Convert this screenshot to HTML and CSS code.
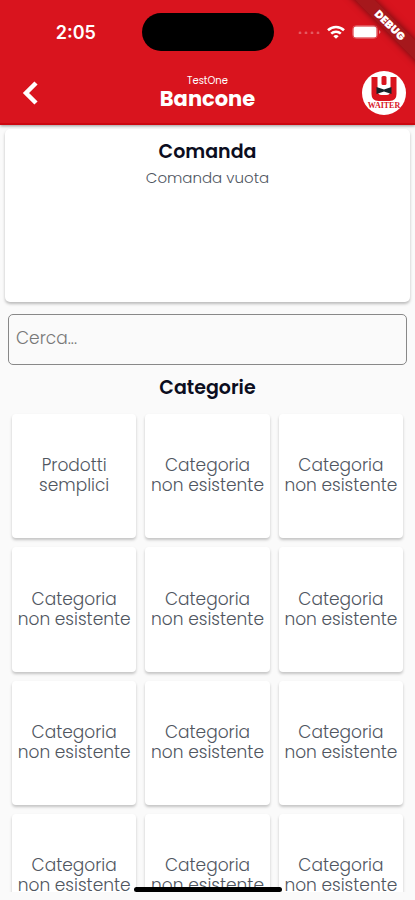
FILE: index.html
```html
<!DOCTYPE html>
<html lang="it">
<head>
<meta charset="utf-8">
<meta name="viewport" content="width=device-width, initial-scale=1">
<title>Bancone</title>
<link rel="stylesheet" href="styles.css">
</head>
<body>
<header class="header">
  <div class="status">
    <time class="clock">2:05</time>
    <span class="island"></span>
    <span class="signals">
      <svg width="22" height="4" viewBox="0 0 22 4" fill="#fff" fill-opacity=".3"><circle cx="2" cy="3" r="1.400"/><circle cx="8" cy="3" r="1.400"/><circle cx="14" cy="3" r="1.400"/><circle cx="20" cy="3" r="1.400"/></svg>
      <svg width="18" height="14" viewBox="0 0 18 14" fill="none" stroke="#fff" stroke-width="2.6"><path d="M1 5.2a11.6 11.6 0 0 1 16 0"/><path d="M4.2 8.6a7 7 0 0 1 9.6 0"/><path d="M9 13.8 6.300 11.200a4 4 0 0 1 5.400 0z" fill="#fff" stroke="none"/></svg>
      <svg width="29" height="14" viewBox="0 0 29 14"><rect x=".5" y=".5" width="25" height="13" rx="4" fill="none" stroke="#fff" stroke-opacity=".25"/><rect x="1.500" y="1.500" width="23" height="11" rx="2.500" fill="#fff"/><path d="M27 5q3 2 0 4z" fill="#fff" fill-opacity=".5"/></svg>
    </span>
  </div>
  <div class="bar">
    <button class="back" type="button" aria-label="Indietro">
      <svg width="18" height="26" viewBox="0 0 18 26" fill="none" stroke="#fff" stroke-width="4.500"><path d="M14 3 4 13l10 10"/></svg>
    </button>
    <div class="heading">
      <span class="venue">TestOne</span>
      <h1 class="title">Bancone</h1>
    </div>
    <div class="logo" role="img" aria-label="Waiter">
      <svg width="44" height="44" viewBox="0 0 44 44">
        <circle cx="22" cy="22" r="22" fill="#fff"/>
        <path d="M9.500 6h6v13q0 5 4 5h5q4 0 4-5V6h6v17q0 7-7 7h-11q-7 0-7-7z" fill="#d9141e"/>
        <rect x="19.500" y="5" width="5" height="9" rx="1.500" fill="#d9141e"/>
        <path d="M14.500 16 22 18.500l7.500-2.500v7L22 20.500l-7.500 2.500z" fill="#16252b"/>
        <text class="logo-text" x="22" y="37" text-anchor="middle">WAITER</text>
      </svg>
    </div>
  </div>
  <div class="ribbon">DEBUG</div>
</header>
<main class="main">
  <section class="order">
    <h2 class="section-title">Comanda</h2>
    <p class="empty">Comanda vuota</p>
  </section>
  <input class="search" type="search" placeholder="Cerca..." aria-label="Cerca">
  <h2 class="section-title">Categorie</h2>
  <div class="tiles">
    <button class="tile" type="button">Prodotti semplici</button>
    <button class="tile" type="button">Categoria non esistente</button>
    <button class="tile" type="button">Categoria non esistente</button>
    <button class="tile" type="button">Categoria non esistente</button>
    <button class="tile" type="button">Categoria non esistente</button>
    <button class="tile" type="button">Categoria non esistente</button>
    <button class="tile" type="button">Categoria non esistente</button>
    <button class="tile" type="button">Categoria non esistente</button>
    <button class="tile" type="button">Categoria non esistente</button>
    <button class="tile" type="button">Categoria non esistente</button>
    <button class="tile" type="button">Categoria non esistente</button>
    <button class="tile" type="button">Categoria non esistente</button>
  </div>
</main>
<div class="home-indicator"></div>
</body>
</html>
```
FILE: styles.css
```css
* { box-sizing: border-box; }

body {
  margin: 0;
  height: 100vh;
  display: flex;
  flex-direction: column;
  overflow: hidden;
  background: #fafafa;
  color: #50565f;
  font-family: Poppins, Inter, "Open Sans", sans-serif;
  font-size: 17px;
  font-weight: 300;
}

h1, h2, p { margin: 0; }

button, input { font: inherit; color: inherit; }

.header {
  position: relative;
  z-index: 1;
  flex: none;
  overflow: hidden;
  padding-bottom: 8px;
  background: #d9141e;
  color: #fff;
  border-bottom: 2px solid #cc0710;
  box-shadow: 0 1px 3px rgba(0, 0, 0, .4);
}

.status {
  display: grid;
  grid-template-columns: 1fr 132px 1fr;
  align-items: center;
  padding-top: 13px;
}

.clock {
  justify-self: center;
  padding-left: 10px;
  font-family: Inter, sans-serif;
  font-size: 18px;
  font-weight: 600;
}

.island {
  height: 38px;
  border-radius: 20px;
  background: #000;
}

.signals {
  display: flex;
  align-items: center;
  gap: 7px;
  padding-left: 24px;
}

.signals svg { flex: none; }

.bar {
  display: grid;
  grid-template-columns: 44px 1fr 44px;
  align-items: center;
  padding: 20px 9px 0;
}

.back {
  display: grid;
  place-items: center;
  height: 44px;
  padding: 0;
  border: 0;
  background: none;
}

.heading { text-align: center; }

.venue {
  display: block;
  font-size: 10px;
  font-weight: 400;
  line-height: 12px;
}

.title {
  font-size: 21px;
  font-weight: 700;
  line-height: 24px;
}

.logo { height: 44px; }

.logo-text {
  fill: #d9141e;
  font-family: "Liberation Serif", serif;
  font-size: 8px;
  font-weight: 700;
}

.ribbon {
  position: absolute;
  top: 18px;
  right: -35px;
  width: 120px;
  background: rgba(160, 24, 28, .9);
  box-shadow: 0 0 7px rgba(0, 0, 0, .5);
  font-size: 11px;
  font-weight: 900;
  line-height: 14px;
  text-align: center;
  transform: rotate(45deg);
}

.main {
  flex: 1;
  min-height: 0;
  display: flex;
  flex-direction: column;
  margin-bottom: 8px;
}

.order {
  flex: none;
  min-height: 173px;
  margin: 4px 5px 12px;
  padding-top: 9px;
  border-radius: 5px;
  background: #fff;
  box-shadow: 0 2px 3px rgba(0, 0, 0, .25);
  text-align: center;
}

.section-title {
  flex: none;
  color: #0b0d20;
  font-size: 19px;
  font-weight: 600;
  line-height: 28px;
  text-align: center;
}

.empty {
  font-size: 15px;
  line-height: 24px;
}

.search {
  flex: none;
  height: 51px;
  margin: 0 8px 9px;
  padding: 0 7px 4px;
  border: 1px solid #888;
  border-radius: 5px;
  background: transparent;
  appearance: none;
}

.search::placeholder { color: #777; opacity: 1; }

.tiles {
  flex: 1;
  min-height: 0;
  display: grid;
  grid-template-columns: repeat(3, 1fr);
  align-content: start;
  gap: 9px;
  padding: 12px;
  overflow-y: auto;
  scrollbar-width: none;
}

.tile {
  aspect-ratio: 1;
  padding: 0 4px 2px;
  border: 0;
  border-radius: 4px;
  background: #fff;
  box-shadow: 0 2px 3px rgba(0, 0, 0, .22);
  line-height: 20px;
}

.home-indicator {
  position: fixed;
  z-index: 2;
  bottom: 8px;
  left: 50%;
  width: 148px;
  height: 5px;
  border-radius: 3px;
  background: #000;
  transform: translateX(-50%);
}
```
